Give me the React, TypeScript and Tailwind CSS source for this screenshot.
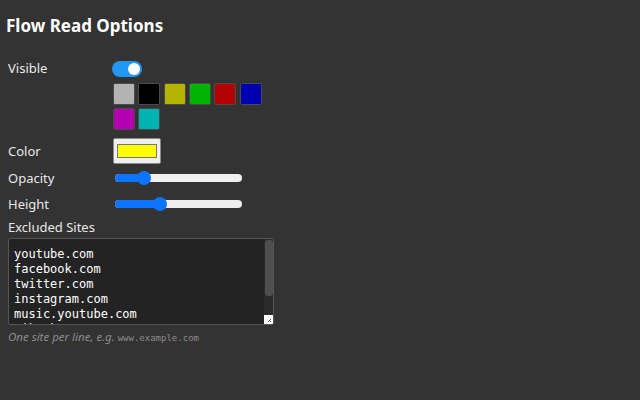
import React from "react";

const swatches = ["#b3b3b3", "#000000", "#b3b300", "#00b300", "#b30000", "#0000b3", "#b300b3", "#00b3b3"];
const sites = ["youtube.com", "facebook.com", "twitter.com", "instagram.com", "music.youtube.com", "tiktok.com"];

function Slider({ value }: { value: number }) {
  return (
    <div className="relative h-4 w-[128px]">
      <div className="absolute left-px right-0 top-1 h-2 rounded-full bg-[#efefef]" />
      <div className="absolute left-px top-1 h-2 rounded-l-full bg-[#0d74ff]" style={{ width: 8 + value * 112 }} />
      <div
        className="absolute top-[1px] h-[14px] w-[14px] rounded-full bg-[#0d74ff]"
        style={{ left: 1 + value * 112 }}
      />
    </div>
  );
}

export default function App() {
  return (
    <div className="min-h-screen bg-[#333333] px-2 pt-[14px] text-[13px] leading-4 text-[#e8e8e8]" style={{ fontFamily: '"Noto Sans", sans-serif' }}>
      <h1 className="-ml-0.5 text-[17px] font-bold leading-[24px] text-white">Flow Read Options</h1>

      {/* Visible */}
      <div className="mt-[23px] flex">
        <div className="w-[104px] leading-[14px]">Visible</div>
        <div>
          <div className="relative h-4 w-[30px] rounded-full bg-[#2196f3]">
            <div className="absolute right-[2px] top-[2px] h-3 w-3 rounded-full bg-white" />
          </div>
          <div className="mt-[6px] grid w-[150px] grid-cols-6 gap-[3px] pl-px">
            {swatches.map((c) => (
              <div key={c} className="h-[22px] w-[22px] rounded-[2px] border border-[#4a4a4a]" style={{ background: c }} />
            ))}
          </div>
        </div>
      </div>

      {/* Color */}
      <div className="mt-[8px] flex h-[26px] items-center">
        <div className="w-[104px]">Color</div>
        <div className="ml-px flex h-[26px] w-[48px] items-center justify-center rounded-[2px] border border-[#8a8a8a] bg-[#efefef]">
          <div className="h-[14px] w-[40px] border border-[#777] bg-[#ffff00]" />
        </div>
      </div>

      {/* Opacity */}
      <div className="mt-[6px] flex h-4 items-center">
        <div className="w-[106px]">Opacity</div>
        <Slider value={0.2} />
      </div>

      {/* Height */}
      <div className="mt-[10px] flex h-4 items-center">
        <div className="w-[106px]">Height</div>
        <Slider value={0.34} />
      </div>

      <div className="mt-[7px] h-4">Excluded Sites</div>

      {/* Textarea */}
      <div className="relative mt-[3px] h-[87px] w-[266px] overflow-hidden rounded-[2px] border border-[#555] bg-[#232323]">
        <div
          className="pl-[5px] pt-[8px] text-[12px] leading-[15px] text-white"
          style={{ fontFamily: '"DejaVu Sans Mono", monospace' }}
        >
          {sites.map((s) => (
            <div key={s}>{s}</div>
          ))}
        </div>
        <div className="absolute bottom-0 right-0 top-0 w-[9px] bg-[#2b2b2b]">
          <div className="mx-auto mt-px h-[56px] w-[8px] rounded-[3px] bg-[#4f4f4f]" />
        </div>
        <div className="absolute bottom-0 right-0 h-[9px] w-[9px] bg-white">
          <svg viewBox="0 0 9 9" className="h-[9px] w-[9px]">
            <path d="M7 4 L4 7 M7 6 L6 7" stroke="#555" strokeWidth="1" />
          </svg>
        </div>
      </div>

      <div className="mt-[4px] text-[11.5px] italic leading-4 text-[#8c8c8c]">
        One site per line, e.g.{" "}
        <span className="text-[9px] not-italic" style={{ fontFamily: '"DejaVu Sans Mono", monospace' }}>
          www.example.com
        </span>
      </div>
    </div>
  );
}
